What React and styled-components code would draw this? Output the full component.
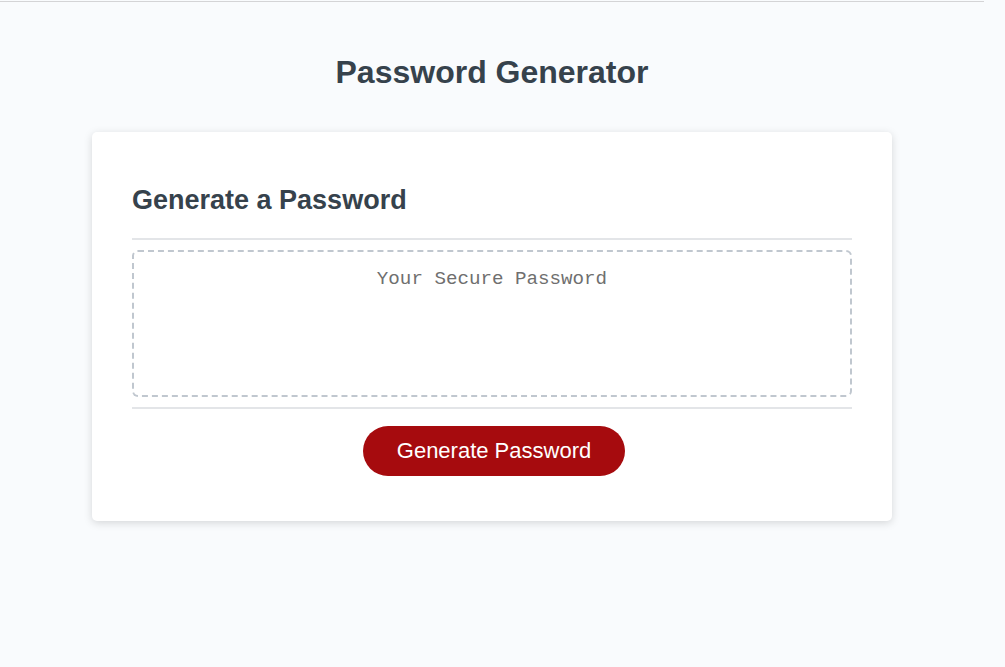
import React from 'react';
import styled, { createGlobalStyle } from 'styled-components';

const GlobalStyle = createGlobalStyle`
  html, body {
    margin: 0;
    padding: 0;
    background-color: #f9fbfd;
  }
  body {
    font-family: "Liberation Sans", Helvetica, Arial, sans-serif;
  }
`;

const Page = styled.div`
  margin-top: 1px;
  border-top: 1px solid #d4d4d6;
  min-height: 664px;
  width: 984px;
  display: flex;
  flex-direction: column;
  align-items: center;
`;

const Header = styled.header`
  padding-top: 52px;
  padding-bottom: 41px;
  text-align: center;
`;

const Title = styled.h1`
  margin: 0;
  font-size: 32px;
  line-height: 37px;
  font-weight: 700;
  color: #36424c;
`;

const Card = styled.section`
  box-sizing: border-box;
  width: 800px;
  padding: 30px 40px;
  background-color: #fff;
  border-radius: 5px;
  box-shadow: rgba(0, 0, 0, 0.15) 0px 2px 8px 0px;
  color: #36424c;
`;

const CardTitle = styled.h2`
  margin: 23px 0 22px;
  font-size: 27px;
  line-height: 31px;
  font-weight: 700;
`;

const Divider = styled.div`
  height: 2px;
  background: #e3e5e8;
`;

const PasswordBox = styled.textarea`
  display: block;
  box-sizing: border-box;
  width: 100%;
  height: 147px;
  margin: 10px 0;
  padding: 16px 15px 84px;
  border: 2px dashed #c0c7cf;
  border-radius: 6px;
  resize: none;
  overflow: hidden;
  outline: none;
  text-align: center;
  font-family: "Liberation Mono", "Courier New", monospace;
  font-size: 19.2px;
  line-height: 22px;
  color: #333;
  background: #fff;

  &::placeholder {
    color: #6f6f6f;
  }
`;

const Footer = styled.div`
  display: flex;
  justify-content: center;
  padding: 17px 0 15px 4px;
`;

const Button = styled.button`
  border: none;
  background-color: #a60b0e;
  border-radius: 25px;
  color: #fff;
  font-family: "Liberation Sans", Helvetica, Arial, sans-serif;
  font-size: 22px;
  line-height: 22px;
  padding: 14px 34px;
  cursor: pointer;
`;

export default function App() {
  return (
    <>
      <GlobalStyle />
      <Page>
        <Header>
          <Title>Password Generator</Title>
        </Header>
        <Card>
          <CardTitle>Generate a Password</CardTitle>
          <Divider />
          <PasswordBox readOnly placeholder="Your Secure Password" aria-label="Generated Password" />
          <Divider />
          <Footer>
            <Button type="button">Generate Password</Button>
          </Footer>
        </Card>
      </Page>
    </>
  );
}
